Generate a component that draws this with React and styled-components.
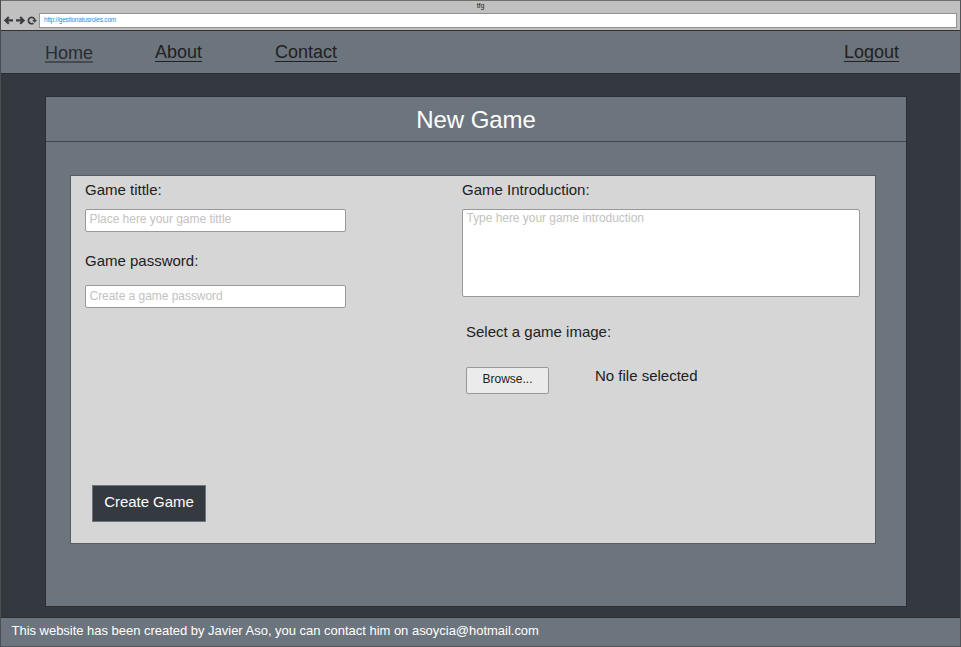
import React from "react";
import styled, { createGlobalStyle } from "styled-components";

const Global = createGlobalStyle`
  *, *::before, *::after { box-sizing: border-box; }
  body { margin: 0; font-family: "Liberation Sans", Arial, sans-serif; overflow: hidden; }
  input, textarea, button { font-family: inherit; margin: 0; }
`;

const Window = styled.div`
  width: 961px;
  height: 647px;
  display: flex;
  flex-direction: column;
  background: #343940;
  border-right: 1px solid #505357;
  border-left: 1px solid #4a4d51;
`;

const Chrome = styled.header`
  height: 30px;
  flex: none;
  background: #c0c0c0;
  border-top: 1px solid #6e6e6e;
  display: flex;
  flex-direction: column;
`;

const WindowTitle = styled.div`
  height: 12px;
  line-height: 9px;
  font-size: 7px;
  letter-spacing: -0.1px;
  text-align: center;
  color: #222;
`;

const AddressBar = styled.div`
  display: flex;
  padding: 0 3px 0 2px;
`;

const BrowserIcons = styled.svg`
  display: block;
  width: 36px;
  height: 14px;
  flex: none;
`;

const Address = styled.div`
  flex: 1;
  height: 15px;
  background: #fff;
  border: 1px solid #929292;
  padding-left: 4px;
  font-size: 6.5px;
  line-height: 12px;
  letter-spacing: -0.21px;
  color: #2490ea;
`;

const Nav = styled.nav`
  height: 44px;
  flex: none;
  display: flex;
  align-items: flex-start;
  padding: 11px 61px 0 44px;
  background: #6c757d;
  border-top: 1px solid #2f3337;
  border-bottom: 1px solid #2b2f34;
`;

const NavLink = styled.a`
  width: ${(p) => p.$slot || "auto"};
  margin-left: ${(p) => (p.$end ? "auto" : 0)};
  padding-top: ${(p) => (p.$active ? "1px" : 0)};
  color: ${(p) => (p.$active ? "#292c30" : "#212121")};

  span {
    display: block;
    width: fit-content;
    height: 20px;
    font-size: 18px;
    line-height: 20px;
    text-decoration: underline;
    text-decoration-thickness: ${(p) => (p.$active ? "2px" : "1px")};
    text-decoration-color: ${(p) => (p.$active ? "#454b51" : "#212121")};
    text-underline-offset: ${(p) => (p.$active ? "2px" : "3px")};
  }
`;

const Main = styled.main`
  flex: 1;
  display: flex;
  padding: 22px 53px 10px 44px;
`;

const Panel = styled.section`
  flex: 1;
  display: flex;
  flex-direction: column;
  background: #6c757d;
  border: 1px solid #2b2f34;
`;

const PanelTitle = styled.h1`
  height: 45px;
  margin: 0;
  border-bottom: 1px solid #40464c;
  color: #fff;
  font-size: 24px;
  font-weight: 400;
  line-height: 45px;
  letter-spacing: -0.05px;
  text-align: center;
`;

const Form = styled.form`
  flex: 1;
  margin: 33px 30px 62px 24px;
  display: grid;
  grid-template-columns: 377px 1fr;
  grid-template-rows: 309px 1fr;
  padding: 0 15px 0 14px;
  background: #d6d6d6;
  border: 1px solid #575c61;
`;

const Column = styled.div`
  display: flex;
  flex-direction: column;
`;

const Label = styled.label`
  height: 18px;
  margin-top: ${(p) => p.$top};
  padding-left: ${(p) => p.$inset || 0};
  color: #212121;
  font-size: 15px;
  line-height: 18px;
`;

const Input = styled.input`
  width: 261px;
  height: 23px;
  margin-top: ${(p) => p.$top};
  padding: 0 4px ${(p) => p.$textBottom || 0} 3.5px;
  border: 1px solid #999;
  border-radius: 2px;
  font-size: 12px;
  letter-spacing: -0.04px;
  &::placeholder { color: #c2c2c2; opacity: 1; }
`;

const TextArea = styled.textarea`
  width: 398px;
  height: 88px;
  margin-top: 10px;
  padding: 1px 4px 1px 3.5px;
  border: 1px solid #999;
  border-radius: 2px;
  resize: none;
  font-size: 12px;
  line-height: 15px;
  letter-spacing: -0.04px;
  &::placeholder { color: #c2c2c2; opacity: 1; }
`;

const FileRow = styled.div`
  display: flex;
  align-items: flex-end;
  margin: 25px 0 0 4px;
  gap: 46px;
`;

const BrowseButton = styled.button`
  width: 83px;
  height: 27px;
  padding: 0 0 3px;
  background: #ebebeb;
  border: 1px solid #999;
  border-radius: 2px;
  color: #212121;
  font-size: 12px;
`;

const FileStatus = styled.span`
  height: 28px;
  color: #212121;
  font-size: 15px;
  line-height: 20px;
`;

const SubmitButton = styled.button`
  width: 114px;
  height: 37px;
  margin: 0 0 0 7px;
  padding: 0 0 4px;
  background: #343a40;
  border: 1px solid #70757a;
  color: #fff;
  font-size: 15px;
  letter-spacing: -0.06px;
`;

const Footer = styled.footer`
  height: 30px;
  flex: none;
  padding-left: 10.5px;
  background: #6c757d;
  border-top: 1px solid #2b2f34;
  border-bottom: 1px solid #50565c;
  color: #fff;
  font-size: 13px;
  line-height: 25px;
  letter-spacing: -0.02px;
`;

export default function App() {
  return (
    <>
      <Global />
      <Window>
        <Chrome>
          <WindowTitle>tfg</WindowTitle>
          <AddressBar>
            <BrowserIcons viewBox="0 0 36 14" fill="none" stroke="#3b3b3b" strokeWidth="2.1">
              <path d="M5.8 4.1 2.4 7.4l3.4 3.3M2.7 7.4h7.3" />
              <path d="m17.2 4.1 3.4 3.3-3.4 3.3M20.3 7.4H13" />
              <path d="M30.4 10.2A3.2 3.2 0 1 1 31.8 7.2" strokeWidth="1.7" />
              <path d="M29.2 6.9h4.8l-2.4 2.9z" fill="#3b3b3b" stroke="none" />
            </BrowserIcons>
            <Address>http://gestionatusroles.com</Address>
          </AddressBar>
        </Chrome>
        <Nav>
          <NavLink $active $slot="110px"><span>Home</span></NavLink>
          <NavLink $slot="120px"><span>About</span></NavLink>
          <NavLink><span>Contact</span></NavLink>
          <NavLink $end><span>Logout</span></NavLink>
        </Nav>
        <Main>
          <Panel>
            <PanelTitle>New Game</PanelTitle>
            <Form>
              <Column>
                <Label $top="5px">Game tittle:</Label>
                <Input $top="10px" $textBottom="3px" placeholder="Place here your game tittle" />
                <Label $top="20px">Game password:</Label>
                <Input $top="15px" $textBottom="1px" placeholder="Create a game password" />
              </Column>
              <Column>
                <Label $top="5px">Game Introduction:</Label>
                <TextArea placeholder="Type here your game introduction" />
                <Label $top="26px" $inset="4px">Select a game image:</Label>
                <FileRow>
                  <BrowseButton type="button">Browse...</BrowseButton>
                  <FileStatus>No file selected</FileStatus>
                </FileRow>
              </Column>
              <SubmitButton type="button">Create Game</SubmitButton>
            </Form>
          </Panel>
        </Main>
        <Footer>This website has been created by Javier Aso, you can contact him on asoycia@hotmail.com</Footer>
      </Window>
    </>
  );
}
